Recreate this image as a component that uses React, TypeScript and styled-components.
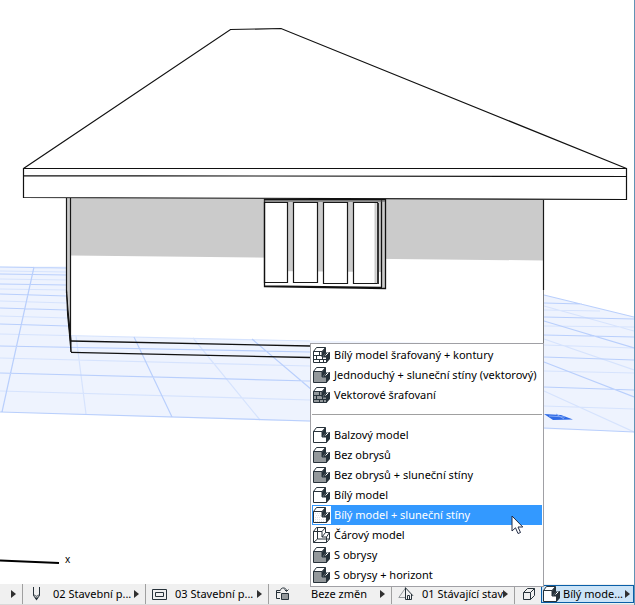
import React from "react";
import styled, { createGlobalStyle, css } from "styled-components";

const GlobalStyle = createGlobalStyle`
  *, *::before, *::after { box-sizing: border-box; }
  body {
    margin: 0;
    background: #fff;
    color: #000;
    font-family: "Noto Sans", "Open Sans", sans-serif;
    font-size: 11px;
    line-height: 20px;
  }
  button { font: inherit; color: inherit; }
`;

const Shell = styled.main`
  position: relative;
  display: grid;
  grid-template-rows: 1fr auto;
  height: 100vh;
  overflow: hidden;
  border-right: 1px solid #6292b4;
`;

const Viewport = styled.section`
  min-height: 0;
  overflow: hidden;
`;

const Scene = styled.svg`
  display: block;
  width: 100%;
  height: 100%;
`;

const Toolbar = styled.nav`
  display: flex;
  height: 21px;
  background: #f0f0f0;
  border-bottom: 1px solid #d9d9d9;
`;

const Cell = styled.button<{ $kind?: "start" | "icon" | "active" }>`
  display: flex;
  align-items: center;
  flex: ${({ $kind }) =>
    $kind === "start" ? "0 0 23px" : $kind === "icon" ? "0 0 26px" : $kind === "active" ? "0 0 93px" : "1 1 123px"};
  min-width: 0;
  height: 20px;
  padding: 0 6px;
  gap: 8px;
  border: 0;
  border-right: 1px solid #a0a0a0;
  background: transparent;
  text-align: left;
  white-space: nowrap;
  ${({ $kind }) => $kind === "start" && css`padding-left: 11px;`}
  ${({ $kind }) => $kind === "icon" && css`
    padding-left: 8px;
    border-right: 0;
  `}
  ${({ $kind }) => $kind === "active" && css`
    height: 18px;
    padding: 0 3px 0 1px;
    gap: 2px;
    border: 1px solid #0a5fa8;
    background: #cce4f7;
    align-self: center;
  `}
`;

const CellLabel = styled.span<{ $indent?: boolean }>`
  flex: 1;
  min-width: 0;
  padding-left: ${({ $indent }) => ($indent ? "12px" : "0")};
`;

const Glyph = styled.svg`
  display: block;
  flex: none;
`;

const TrailingGlyph = styled(Glyph)`
  margin-left: -8px;
`;

const Menu = styled.div`
  position: absolute;
  right: 90px;
  bottom: 18px;
  width: 234px;
  padding: 1px;
  border: 1px solid #a0a0a5;
  background: #fff;
`;

const MenuItem = styled.button<{ $selected?: boolean }>`
  display: flex;
  align-items: center;
  gap: 3px;
  width: 100%;
  height: 20px;
  padding: 0 0 0 1px;
  border: 0;
  background: ${({ $selected }) => ($selected ? "#3399ff" : "transparent")};
  color: ${({ $selected }) => ($selected ? "#fff" : "#000")};
  text-align: left;
  white-space: nowrap;
`;

const IconTile = styled.span`
  display: flex;
  align-items: center;
  width: 18px;
  height: 18px;
  background: #fff;
`;

const Separator = styled.hr`
  height: 1px;
  margin: 9px 0 10px;
  border: 0;
  background: #a0a0a0;
`;

const Pointer = styled.svg`
  position: absolute;
  right: 19px;
  bottom: 51px;
`;

type Look = "brick" | "grey" | "greyBrick" | "white" | "dotted" | "wire";

const INK = "#27323a";

function ModelIcon({ look }: { look: Look }) {
  const fill = look === "grey" || look === "greyBrick" ? "#93989b" : "#fff";
  const bricks = look === "brick" || look === "greyBrick";
  return (
    <Glyph width="18" height="17" viewBox="0 0 18 17" aria-hidden="true">
      {look !== "wire" && (
        <>
          <path d="M9 4.500 12.500.5H13V6l-3.500 4H9zM13 9.500 16.500 5H17v7l-3.500 4H13z" fill={INK} />
          <path d="M10 10 13 5.500h4L13.500 10z" fill={INK} />
          <path d="M12.500 8.500 15 6" stroke="#fff" />
        </>
      )}
      <path d="M.5 4.500 3.500.5h9L9 4.500z" fill="#fff" stroke={INK} />
      <path d="M.5 4.500H9V10h4.500v5.500H.5z" fill={look === "wire" ? "none" : fill} stroke={INK} />
      {look === "wire" && (
        <path d="M12.500.5v5h4V12l-3 3.500M9 10l3.500-4.500M13.500 10l3-4.500M4.500.5V12h12M.5 15.500l4-3.500" fill="none" stroke={INK} />
      )}
      {bricks && (
        <path d="M.5 8.500H9M.5 12.500h13M6.500 4.500v4M3.500 8.500v4M9.500 10v2.500M6.500 12.500v3M10.500 12.500v3" fill="none" stroke={INK} />
      )}
      {look === "dotted" && (
        <path d="M2 6.500h6M3 8.500h6M2 10.500h6M2 12.500h11M2 14.500h11" stroke="#dfe2e4" strokeDasharray="1 1" />
      )}
    </Glyph>
  );
}

const ArrowShape = () => <path d="M0 0 5 4 0 8z" fill="#303030" />;

const ArrowIcon = () => (
  <TrailingGlyph width="5" height="8" viewBox="0 0 5 8" aria-hidden="true">
    <ArrowShape />
  </TrailingGlyph>
);

const ArrowMark = () => (
  <Glyph width="5" height="8" viewBox="0 0 5 8" aria-hidden="true">
    <ArrowShape />
  </Glyph>
);

const PenIcon = () => (
  <Glyph width="16" height="14" viewBox="0 0 16 14" aria-hidden="true">
    <path d="M4.500 0v8.500l3 4 3-4V0M4.500 8.500c1.500-1 2 .8 3 .8s1.500-1.800 3-.8" fill="none" stroke={INK} />
    <path d="m5.500 10.500 2 3 2-3z" fill={INK} />
  </Glyph>
);

const FrameIcon = () => (
  <Glyph width="15" height="11" viewBox="0 0 15 11" aria-hidden="true">
    <path d="M.5.5h14v10H.5zM3.500 3.500h8v4h-8z" fill="none" stroke={INK} />
  </Glyph>
);

const SwapIcon = () => (
  <Glyph width="16" height="14" viewBox="0 0 16 14" aria-hidden="true">
    <path d="M5 11.500H1.500v-8H5M1.500 5.500h4M5.500 3.500c0-3.500 6-3.500 6 .5M9.500 2.500l2 2 2-2" fill="none" stroke={INK} />
    <path d="M6.500 6.500h7v6h-7z" fill="#93989b" stroke={INK} />
  </Glyph>
);

const HouseIcon = () => (
  <Glyph width="16" height="14" viewBox="0 0 16 14" aria-hidden="true">
    <path d="M7.500 1 .8 10.500H7" fill="none" stroke="#93989b" />
    <path d="M7.500.5v12h6V7M7.500.8l7.500 8M9.500 12V8.500h2V12" fill="none" stroke={INK} />
  </Glyph>
);

const BoxIcon = () => (
  <Glyph width="12" height="12" viewBox="0 0 12 12" aria-hidden="true">
    <path d="M.5 4.500h7v7h-7zM.5 4.500l4-4h7l-4 4M11.500.5v7l-4 4" fill="none" stroke={INK} />
  </Glyph>
);

type Line = [number, number, number, number];

const strongGrid: Line[] = [
  [0, 267, 67, 268], [0, 274, 67, 275], [0, 284, 67, 285], [0, 294, 67, 296], [0, 308, 67, 310],
  [0, 324, 68, 326], [0, 346, 310, 352], [0, 373, 310, 381], [0, 412, 310, 421],
  [34, 267, 2, 412], [134, 337, 172, 417], [252, 339, 312, 390],
  [544, 303, 582, 304], [544, 317, 634, 319], [544, 335, 634, 337], [544, 357, 634, 360],
  [544, 387, 634, 390], [544, 428, 634, 432], [544, 295, 634, 317], [544, 321, 634, 348],
  [544, 362, 634, 397],
];

const faintGrid: Line[] = [
  [0, 271, 67, 272], [0, 279, 67, 280], [0, 289, 67, 290], [0, 301, 67, 303], [0, 316, 68, 318],
  [0, 334, 310, 341], [0, 358, 310, 366], [0, 391, 310, 400],
  [76, 336, 86, 414], [193, 338, 260, 420],
  [544, 310, 600, 311], [544, 326, 634, 327], [544, 345, 634, 348], [544, 371, 634, 373],
  [544, 406, 634, 409], [544, 306, 634, 331], [544, 339, 634, 370], [544, 391, 634, 432],
];

const toPath = (lines: Line[]) => lines.map(([a, b, c, d]) => `M${a} ${b}L${c} ${d}`).join("");

function House() {
  return (
    <Scene viewBox="0 0 634 584" preserveAspectRatio="xMinYMax slice" role="img" aria-label="3D model">
      <path d="M71 198h472.500v147L71 336z" fill="#fff" />
      <path d="M0 266.500h68v69.500l475 9V295l91 22v115L0 412z" fill="#eef3fe" />
      <path d={toPath(faintGrid)} stroke="#d6e3fd" strokeWidth="1.200" fill="none" />
      <path d={toPath(strongGrid)} stroke="#b9cffc" strokeWidth="1.200" fill="none" />
      <path d="m544 414 17 1 12 4.500-20 .5z" fill="#2e6ae6" />
      <path d="m549 416 16 1M556 414l8 5" stroke="#80a6f5" />

      <path d="M71 198h472.500v62.500L71 255.500z" fill="#cbcbcb" />
      <path d="M66.500 198h4v154l-4-58z" fill="#cbcbcb" />
      <path d="M66.500 198v95M70.500 198v143M543.500 200v90" stroke="#181818" strokeWidth="1.200" fill="none" />
      <path d="M543.500 290v72" stroke="#777" />
      <path d="m66.500 290 1 24 3.500 38v-12l-3-30z" fill="#111" stroke="#111" />
      <path d="M71 341 310 346M71 352.300 310 357.500" stroke="#111" strokeWidth="1.300" />

      <path d="M264 199h122v89l-122-1z" fill="#fff" />
      <path d="M265 200h117v72l-117-1zM382 200h4v88h-4z" fill="#cbcbcb" />
      <path d="M264.500 202.500h23v80h-23zM293.500 202.500h24v80h-24zM323.500 202.500h24v81h-24zM353.500 202.500h24v81h-24z" fill="#fff" stroke="#181818" strokeWidth="1.200" />
      <path d="M375.500 203v80" stroke="#cbcbcb" strokeWidth="2" />
      <path d="M378 203v81" stroke="#333" strokeWidth="2" />
      <path d="M264.500 199.500h121v89l-121-2zM381.500 200v87M264 286l118 1.500" fill="none" stroke="#111" strokeWidth="1.300" />
      <path d="M264 201h121" stroke="#555" />

      <path d="m23.500 168.500 207-139 50.500-1 345.500 140v31L23.500 197.500z" fill="#fff" />
      <g fill="none" stroke="#111" strokeWidth="1.200">
        <path d="m23.500 168.500 207-139 50.500-1 345.500 140" />
        <path d="M23.500 168.500h603v31L23.500 197.500zM23.500 175.700l603 .8" />
      </g>

      <path d="m0 560.500 59 2.500" stroke="#000" strokeWidth="2" />
      <text x="65" y="563" fontSize="10" fill="#000">x</text>
    </Scene>
  );
}

interface Option {
  label: string;
  look: Look;
  selected?: boolean;
}

const hatchOptions: Option[] = [
  { label: "Bílý model šrafovaný + kontury", look: "brick" },
  { label: "Jednoduchý + sluneční stíny (vektorový)", look: "grey" },
  { label: "Vektorové šrafovaní", look: "greyBrick" },
];

const modelOptions: Option[] = [
  { label: "Balzový model", look: "white" },
  { label: "Bez obrysů", look: "grey" },
  { label: "Bez obrysů + sluneční stíny", look: "grey" },
  { label: "Bílý model", look: "white" },
  { label: "Bílý model + sluneční stíny", look: "dotted", selected: true },
  { label: "Čárový model", look: "wire" },
  { label: "S obrysy", look: "grey" },
  { label: "S obrysy + horizont", look: "grey" },
];

const renderOption = ({ label, look, selected }: Option) => (
  <MenuItem key={label} type="button" role="menuitem" $selected={selected}>
    <IconTile><ModelIcon look={look} /></IconTile>
    {label}
  </MenuItem>
);

export default function App() {
  return (
    <>
      <GlobalStyle />
      <Shell>
        <Viewport><House /></Viewport>
        <Toolbar aria-label="Možnosti zobrazení">
          <Cell type="button" $kind="start" aria-label="Další"><ArrowMark /></Cell>
          <Cell type="button"><PenIcon /><CellLabel>02 Stavební p...</CellLabel><ArrowIcon /></Cell>
          <Cell type="button"><FrameIcon /><CellLabel>03 Stavební p...</CellLabel><ArrowIcon /></Cell>
          <Cell type="button"><SwapIcon /><CellLabel $indent>Beze změn</CellLabel><ArrowIcon /></Cell>
          <Cell type="button"><HouseIcon /><CellLabel>01 Stávající stav</CellLabel><ArrowIcon /></Cell>
          <Cell type="button" $kind="icon" aria-label="3D"><BoxIcon /></Cell>
          <Cell type="button" $kind="active"><ModelIcon look="white" /><CellLabel>Bílý mode...</CellLabel><ArrowMark /></Cell>
        </Toolbar>
        <Menu role="menu">
          {hatchOptions.map(renderOption)}
          <Separator />
          {modelOptions.map(renderOption)}
          <Pointer width="13" height="20" viewBox="0 0 13 20" aria-hidden="true">
            <path d="M1 1v15l3.500-3.200L7 18.500l2.500-1L7 12h4.800z" fill="#fff" stroke="#222b45" />
          </Pointer>
        </Menu>
      </Shell>
    </>
  );
}
